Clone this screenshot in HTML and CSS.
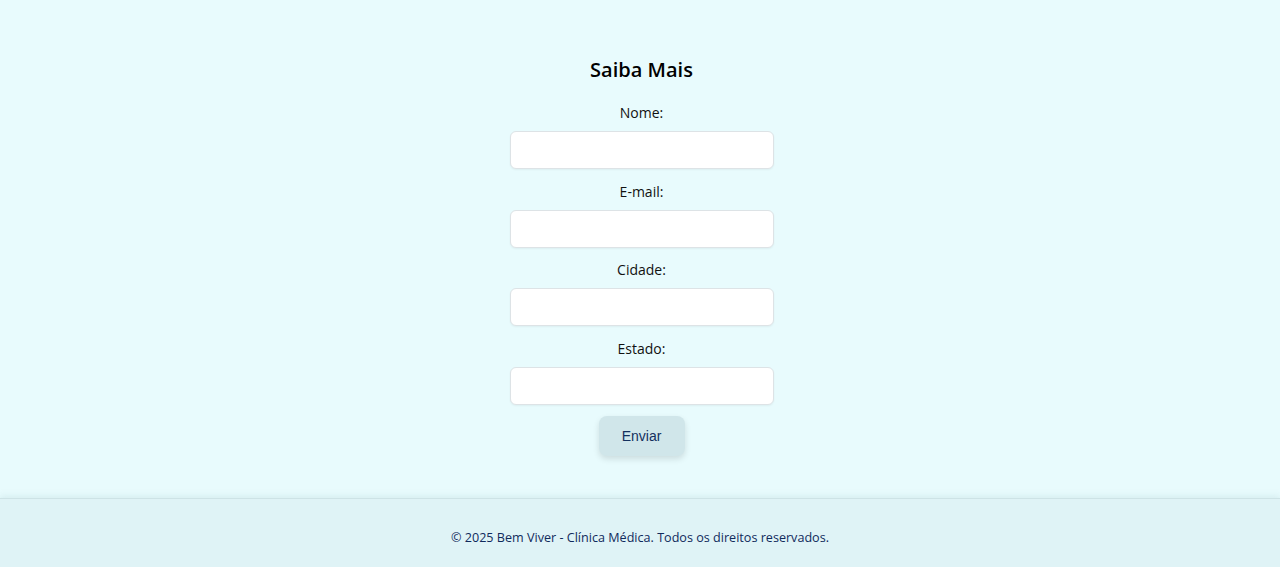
FILE: index.html
```html
<!DOCTYPE html>
<html lang="pt-BR">
<head>
<meta charset="utf-8">
<title>Saiba Mais</title>
<link rel="stylesheet" href="styles.css">
</head>
<body>
<main class="page">
  <section class="form-section">
    <h2 class="title">Saiba Mais</h2>
    <form class="form">
      <div class="field">
        <label class="label" for="nome">Nome:</label>
        <input class="input" id="nome" type="text">
      </div>
      <div class="field">
        <label class="label" for="email">E-mail:</label>
        <input class="input" id="email" type="email">
      </div>
      <div class="field">
        <label class="label" for="cidade">Cidade:</label>
        <input class="input" id="cidade" type="text">
      </div>
      <div class="field">
        <label class="label" for="estado">Estado:</label>
        <input class="input" id="estado" type="text">
      </div>
      <button class="button" type="submit">Enviar</button>
    </form>
  </section>
</main>
<footer class="footer">
  <p class="footer-text">© 2025 Bem Viver - Clínica Médica. Todos os direitos reservados.</p>
</footer>
</body>
</html>
```
FILE: styles.css
```css
* { box-sizing: border-box; }
html, body { margin: 0; padding: 0; }
body {
  background: #e8fbfd;
  font-family: "Open Sans", "Noto Sans", sans-serif;
  color: #111;
  height: 567px;
  display: flex;
  flex-direction: column;
}
.page {
  flex: 1;
  display: flex;
  justify-content: center;
}
.form-section {
  padding-top: 55px;
  padding-left: 3px;
  display: flex;
  flex-direction: column;
  align-items: center;
}
.title {
  margin: 0 0 17px;
  font-size: 20px;
  line-height: 30px;
  font-weight: 600;
  color: #000;
}
.form {
  display: flex;
  flex-direction: column;
  align-items: center;
}
.field {
  display: flex;
  flex-direction: column;
  align-items: center;
  margin-bottom: 11.6px;
}
.label {
  font-size: 14px;
  line-height: 21px;
  margin-bottom: 8px;
  color: #111;
}
.input {
  width: 264px;
  height: 38px;
  border: 1px solid #dde3e6;
  border-radius: 6px;
  background: #fff;
  box-shadow: 0 1px 2px rgba(0,0,0,0.05);
}
.button {
  width: 86px;
  height: 40px;
  border: none;
  border-radius: 8px;
  background: #d0e6ea;
  color: #13305e;
  font-family: "Liberation Sans", Arial, sans-serif;
  font-size: 14px;
  box-shadow: 0 3px 6px rgba(0,0,0,0.12);
}
.footer {
  height: 69px;
  background: #dff3f6;
  border-top: 1px solid #cde3e6;
  box-shadow: 0 -2px 6px rgba(160,200,205,0.25);
  display: flex;
  align-items: center;
  justify-content: center;
}
.footer-text {
  margin: 8px 0 0;
  font-size: 12.6px;
  color: #102a5c;
}
```
